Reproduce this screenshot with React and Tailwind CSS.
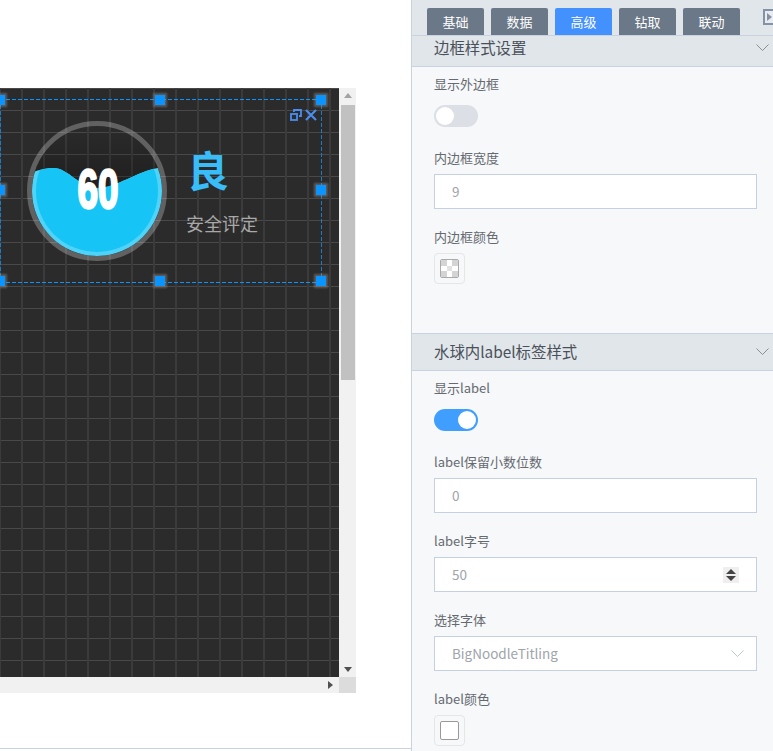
import React from 'react'

const font = { fontFamily: '"Noto Sans CJK SC", "Noto Sans", sans-serif' }

const Chevron = ({ className }) => (
  <svg width="13" height="7" viewBox="0 0 13 7" fill="none" className={className}>
    <path d="M.5.5l6 6 6-6" stroke="currentColor" strokeWidth="1" />
  </svg>
)

const Label = ({ children }) => (
  <div className="h-[22px] text-[13px] leading-[21px] text-[#666a70]">{children}</div>
)

const Toggle = ({ on }) => (
  <div className={`mt-[10px] mb-[20px] flex h-[22px] w-[44px] items-center rounded-full px-[2px] ${on ? 'justify-end bg-[#409eff]' : 'bg-[#dcdfe6]'}`}>
    <div className="h-[18px] w-[18px] rounded-full bg-white" />
  </div>
)

const Input = ({ value, children }) => (
  <div className="mt-[5px] mb-[17px] flex h-[35px] w-[323px] items-center justify-between border border-[#c5d0e0] bg-white pl-[17px] pr-[17px] text-[13.5px] text-[#a0a4ab]">
    <span>{value}</span>
    {children}
  </div>
)

const Swatch = ({ children }) => (
  <div className="mt-[5px] flex h-[31px] w-[31px] items-center justify-center rounded-[4px] border border-[#e6e6e6]">
    {children}
  </div>
)

const SectionHead = ({ title, className }) => (
  <div className={`flex items-center justify-between border-b border-[#c8d2e0] bg-[#e1e6eb] pl-[22px] pr-[4px] text-[15.4px] text-[#4a5058] ${className}`}>
    <span>{title}</span>
    <Chevron className="text-[#8a8f96]" />
  </div>
)

const Handle = ({ className }) => (
  <div className={`absolute h-[10px] w-[10px] bg-[#0a94ff] shadow-[0_0_2px_2px_rgba(150,150,150,0.45)] ${className}`} />
)

const tabs = ['基础', '数据', '高级', '钻取', '联动']

const Gauge = () => (
  <svg width="140" height="140" viewBox="0 0 140 140" className="shrink-0">
    <defs>
      <clipPath id="wave">
        <path d="M0 54C10 49 18 47 26 47C42 47 52 67 70 67C90 67 110 50 131 47C136 47 140 50 140 54V140H0Z" />
      </clipPath>
      <linearGradient id="shade" x1="0" y1="0" x2="0" y2="1">
        <stop offset="0" stopColor="#000" stopOpacity="0" />
        <stop offset="0.5" stopColor="#000" stopOpacity="0.3" />
      </linearGradient>
    </defs>
    <circle cx="70" cy="70" r="67.5" fill="none" stroke="#fff" strokeOpacity="0.26" strokeWidth="5" />
    <circle cx="70" cy="70" r="65" fill="url(#shade)" />
    <g clipPath="url(#wave)">
      <circle cx="70" cy="70" r="65" fill="#4fd3f8" />
      <circle cx="70" cy="70" r="61" fill="#16c5f5" />
    </g>
    <text
      x="0"
      y="0"
      transform="translate(71 87) scale(0.66 1)"
      textAnchor="middle"
      fontSize="56"
      fontWeight="700"
      fill="#fff"
      stroke="#fff"
      strokeWidth="2.5"
      strokeLinejoin="round"
      fontFamily='"Liberation Sans", sans-serif'
    >
      60
    </text>
  </svg>
)

const Canvas = () => (
  <div className="relative h-[589px] w-[339px] overflow-hidden bg-[#2b2b2b] bg-[linear-gradient(to_right,#3b3b3b_2px,transparent_2px),linear-gradient(to_bottom,#494949_1px,transparent_1px)] bg-[size:22px_22px] bg-[position:-1px_0]">
    <div className="absolute left-0 top-[11px] flex h-[184px] w-[322px] bg-[linear-gradient(to_right,#0a94ff_4px,transparent_4px),linear-gradient(to_right,#0a94ff_4px,transparent_4px),linear-gradient(to_bottom,#1a7cc4_4px,transparent_4px),linear-gradient(to_bottom,#1a7cc4_4px,transparent_4px)] pl-[27px] pt-[22px] [background-position:0_0,0_100%,0_0,100%_0] [background-repeat:repeat-x,repeat-x,repeat-y,repeat-y] [background-size:6px_1px,6px_1px,1px_6px,1px_6px]">
      <Gauge />
      <div className="ml-[19px] flex flex-col">
        <div className="mt-[20px] ml-[1px] w-[42px] text-[42px] font-bold leading-[56px] text-[#38bdf8]">良</div>
        <div className="mt-[13px] whitespace-nowrap text-[18px] leading-[26px] text-[#a8a8a8]">安全评定</div>
      </div>
      <div className="absolute right-[5px] top-[10px] flex items-center gap-[3px]">
        <svg width="12" height="12" viewBox="0 0 12 12" fill="none" stroke="#4a8cf0" strokeWidth="1.8">
          <rect x="1" y="5" width="6" height="6" />
          <path d="M4 3V1h7v6H9" />
        </svg>
        <svg width="12" height="12" viewBox="0 0 12 12" fill="none" stroke="#4a8cf0" strokeWidth="2.2">
          <path d="M1 1l10 10M11 1L1 11" />
        </svg>
      </div>
    </div>
    <Handle className="left-[-5px] top-[7px]" />
    <Handle className="left-[155px] top-[7px]" />
    <Handle className="left-[316px] top-[7px]" />
    <Handle className="left-[-5px] top-[97px]" />
    <Handle className="left-[316px] top-[97px]" />
    <Handle className="left-[-5px] top-[188px]" />
    <Handle className="left-[155px] top-[188px]" />
    <Handle className="left-[316px] top-[188px]" />
  </div>
)

const App = () => {
  return (
    <div className="flex h-[751px] w-[773px] overflow-hidden bg-white" style={font}>
      <div className="flex w-[412px] shrink-0 flex-col border-r border-[#c8d2e0]">
        <div className="mt-[88px] w-[356px]">
          <div className="flex">
            <Canvas />
            <div className="flex w-[17px] flex-col items-center bg-[#f1f1f1]">
              <div className="mt-[5px] h-0 w-0 border-x-[4px] border-b-[5px] border-x-transparent border-b-[#a3a3a3]" />
              <div className="mt-[7px] h-[275px] w-[14px] bg-[#c1c1c1]" />
              <div className="mt-auto mb-[5px] h-0 w-0 border-x-[4px] border-t-[5px] border-x-transparent border-t-[#505050]" />
            </div>
          </div>
          <div className="flex h-[16px]">
            <div className="flex w-[339px] items-center justify-end bg-[#f1f1f1] pr-[6px]">
              <div className="h-0 w-0 border-y-[4px] border-l-[5px] border-y-transparent border-l-[#505050]" />
            </div>
            <div className="w-[17px] bg-[#dcdcdc]" />
          </div>
        </div>
        <div className="mt-auto mb-[2px] h-px bg-[#c8d2e0]" />
      </div>

      <div className="flex min-w-0 flex-1 flex-col bg-[#f6f8fa]">
        <div className="flex h-[35px] items-end gap-[7px] overflow-hidden bg-[#e1e6eb] pl-[15px]">
          {tabs.map((t) => (
            <div
              key={t}
              className={`flex h-[27px] w-[57px] shrink-0 items-center justify-center rounded-t-[2px] text-[13px] text-white ${t === '高级' ? 'bg-[#4390ff]' : 'bg-[#6b7888]'}`}
            >
              {t}
            </div>
          ))}
          <div className="mb-[10px] ml-[16px] flex h-[16px] w-[14px] shrink-0 items-center border-2 border-[#8592a5] bg-[#e8ecf0] pl-[2px]">
            <div className="h-0 w-0 border-y-[4px] border-l-[5px] border-y-transparent border-l-[#8592a5]" />
          </div>
        </div>
        <SectionHead title="边框样式设置" className="h-[32px] border-t border-t-[#c8d2e0] pb-[7px]" />
        <div className="pl-[22px] pt-[6px] pb-[49px]">
          <Label>显示外边框</Label>
          <Toggle />
          <Label>内边框宽度</Label>
          <Input value="9" />
          <Label>内边框颜色</Label>
          <Swatch>
            <div className="grid h-[19px] w-[19px] grid-cols-3 overflow-hidden rounded-[2px] border border-[#aaa]">
              <div className="bg-[#d4d4d4]" />
              <div className="bg-white" />
              <div className="bg-[#d4d4d4]" />
              <div className="bg-white" />
              <div className="bg-[#e2e2e2]" />
              <div className="bg-white" />
              <div className="bg-[#d4d4d4]" />
              <div className="bg-white" />
              <div className="bg-[#d4d4d4]" />
            </div>
          </Swatch>
        </div>
        <SectionHead title="水球内label标签样式" className="h-[38px] border-t border-t-[#c8d2e0] pb-[1px]" />
        <div className="pl-[22px] pt-[6px]">
          <Label>显示label</Label>
          <Toggle on />
          <Label>label保留小数位数</Label>
          <Input value="0" />
          <Label>label字号</Label>
          <Input value="50">
            <div className="flex h-[16px] w-[16px] flex-col items-center justify-center gap-[2px] bg-[#efefef]">
              <div className="h-0 w-0 border-x-[5px] border-b-[5px] border-x-transparent border-b-[#444]" />
              <div className="h-0 w-0 border-x-[5px] border-t-[5px] border-x-transparent border-t-[#444]" />
            </div>
          </Input>
          <Label>选择字体</Label>
          <Input value="BigNoodleTitling">
            <Chevron className="mr-[-5px] text-[#c0c4cc]" />
          </Input>
          <Label>label颜色</Label>
          <Swatch>
            <div className="h-[19px] w-[19px] rounded-[2px] border border-[#999] bg-white" />
          </Swatch>
        </div>
      </div>
    </div>
  )
}

export default App
